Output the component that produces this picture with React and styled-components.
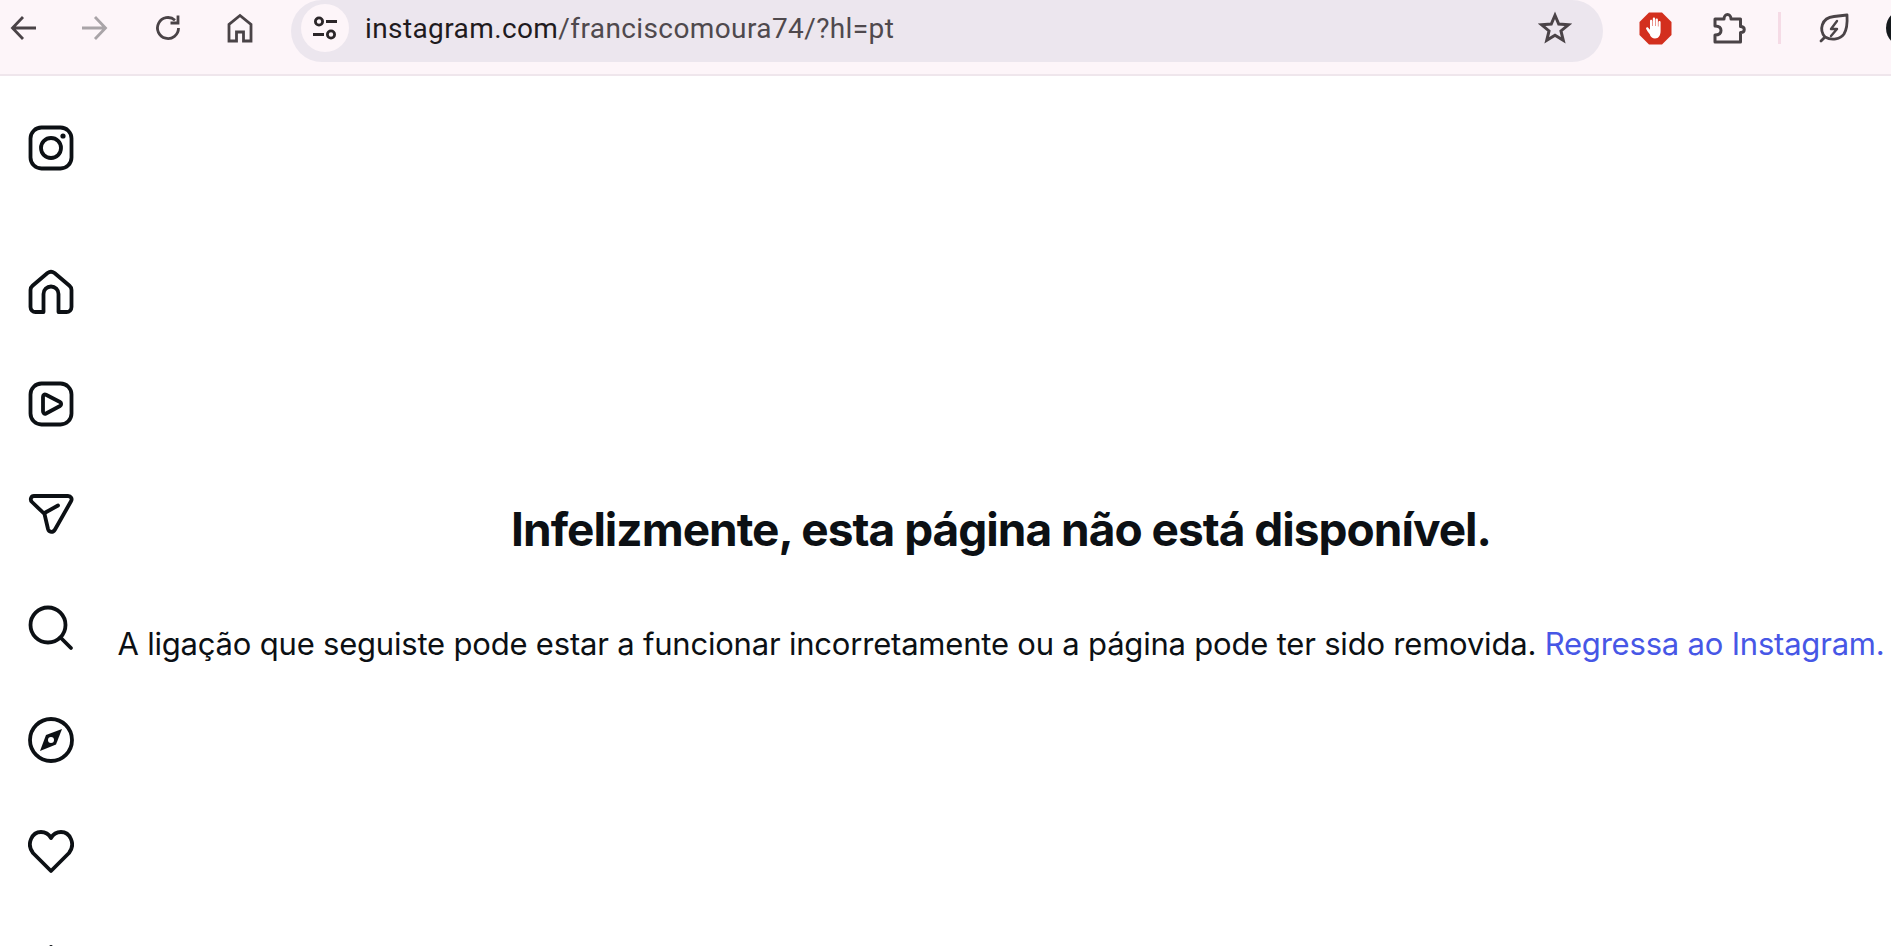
import React from 'react'
import styled, { createGlobalStyle } from 'styled-components'

const Global = createGlobalStyle`
  html, body {
    margin: 0;
    padding: 0;
    height: 100%;
    overflow: hidden;
    background: #fff;
  }
  #root {
    height: 100%;
  }
`

const Page = styled.div`
  height: 946px;
  display: flex;
  flex-direction: column;
  overflow: hidden;
  font-family: Inter, "Liberation Sans", sans-serif;
`

const Toolbar = styled.header`
  flex: 0 0 76px;
  box-sizing: border-box;
  display: flex;
  align-items: flex-start;
  background: #fdf5f9;
  border-bottom: 2px solid #efe6ec;
  overflow: hidden;
`

const NavGroup = styled.nav`
  display: flex;
  flex: 0 0 291px;
`

const NavButton = styled.div`
  width: 72px;
  height: 56px;
  display: flex;
  align-items: center;
  justify-content: center;
  color: ${p => (p.$off ? '#a9a4a8' : '#4a4347')};
  &:first-child {
    margin-left: -12px;
  }
  &:nth-child(2) {
    margin-right: 2px;
    margin-left: -2px;
  }
`

const Omnibox = styled.div`
  flex: 0 0 1312px;
  height: 62px;
  box-sizing: border-box;
  display: flex;
  align-items: center;
  padding: 0 31px 6px 10px;
  background: #ece6ee;
  border-radius: 31px;
  color: #4a4347;
`

const SiteChip = styled.div`
  width: 48px;
  height: 48px;
  border-radius: 50%;
  background: #fdf5f9;
  display: flex;
  align-items: center;
  justify-content: center;
  color: #2b2629;
`

const Url = styled.div`
  flex: 1;
  margin-left: 16px;
  font-family: Roboto, Inter, sans-serif;
  font-size: 28px;
  letter-spacing: 0.4px;
  color: #4f494d;
  span {
    color: #1f1b1e;
  }
`

const Extensions = styled.div`
  flex: none;
  display: flex;
  align-items: center;
  height: 56px;
  padding-left: 36px;
  color: #4a4347;
`

const ExtSlot = styled.div`
  width: ${p => p.$w}px;
  display: flex;
  align-items: center;
`

const Divider = styled.div`
  width: 3px;
  height: 32px;
  background: #f5dbe6;
  margin-right: 37px;
`

const Avatar = styled.div`
  width: 38px;
  height: 38px;
  border-radius: 50%;
  background: #14181c;
  margin-left: 36px;
  flex: none;
`

const Body = styled.div`
  flex: 1;
  display: flex;
  min-height: 0;
`

const Sidebar = styled.aside`
  flex: 0 0 111px;
  box-sizing: border-box;
  padding: 49px 0 0 28px;
  display: flex;
  flex-direction: column;
  color: #0c1014;
`

const Logo = styled.div`
  height: 50px;
  margin-bottom: 96px;
  display: flex;
  align-items: center;
`

const SideItem = styled.div`
  flex: none;
  height: 50px;
  margin-bottom: 62px;
  display: flex;
  align-items: center;
`

const Main = styled.main`
  flex: 1;
  min-width: 0;
  display: flex;
  flex-direction: column;
  align-items: center;
  padding-top: 427px;
  color: #0c1014;
`

const Title = styled.h1`
  margin: 0 0 70px;
  font-size: 46px;
  line-height: 52px;
  font-weight: 700;
  letter-spacing: -1px;
  white-space: nowrap;
`

const Message = styled.p`
  margin: 0;
  font-size: 31px;
  line-height: 38px;
  font-weight: 400;
  letter-spacing: -0.2px;
  white-space: nowrap;
`

const Back = styled.a`
  color: #4757e6;
  text-decoration: none;
`

const Icon = ({ size = 46, sw = 3.8, children }) => (
  <svg width={size} height={size} viewBox="0 0 46 46" fill="none" stroke="currentColor" strokeWidth={sw} strokeLinecap="round" strokeLinejoin="round">
    {children}
  </svg>
)

const Tool = ({ children, size = 32, sw = 2.8 }) => (
  <svg width={size} height={size} viewBox="0 0 32 32" fill="none" stroke="currentColor" strokeWidth={sw} strokeLinejoin="miter">
    {children}
  </svg>
)

export default function App() {
  return (
    <Page>
      <Global />
      <Toolbar>
        <NavGroup>
          <NavButton>
            <Tool><path d="M28 16H5M15 5 4.500 16 15 27" /></Tool>
          </NavButton>
          <NavButton $off>
            <Tool><path d="M4 16h23M17 5l10.500 11L17 27" /></Tool>
          </NavButton>
          <NavButton>
            <Tool><path d="M26.500 16A10.500 10.500 0 1 1 23 8.200" /><path d="M26 3.500V11h-7.500" /></Tool>
          </NavButton>
          <NavButton>
            <Tool><path d="M5 29V12.500L16 3.500l11 9V29h-7.500v-9h-7v9z" /></Tool>
          </NavButton>
        </NavGroup>
        <Omnibox>
          <SiteChip>
            <svg width="28" height="28" viewBox="0 0 28 28" fill="none" stroke="currentColor" strokeWidth="2.800">
              <circle cx="8" cy="7.500" r="3.600" />
              <path d="M15 7.500h11M2 20.500h11" />
              <circle cx="20" cy="20.500" r="3.600" />
            </svg>
          </SiteChip>
          <Url><span>instagram.com</span>/franciscomoura74/?hl=pt</Url>
          <Tool size={34} sw={2.8}>
            <path d="M16 4l3.500 8.300 9 .7-6.900 5.800 2.200 8.800L16 22.900l-7.800 4.700 2.200-8.800L3.500 13l9-.7z" />
          </Tool>
        </Omnibox>
        <Extensions>
          <ExtSlot $w={74}>
            <svg width="33" height="33" viewBox="0 0 33 33">
              <path d="M10 0.500h13L32.500 10v13L23 32.500H10L0.500 23V10z" fill="#d32f1e" />
              <path d="M11.200 23c-1.400-2-3.600-5-4-6-.6-1.400 1-2.300 2-1.200l1.800 2V9c0-1.600 2.200-1.600 2.300 0v5h.5V6.800c0-1.600 2.300-1.600 2.300 0V14h.5V7.800c0-1.600 2.300-1.600 2.300 0V14.500h.5V10c0-1.500 2.200-1.500 2.200 0v9c0 4-1.800 7.500-5.600 7.500-2.600 0-3.900-1.300-5.100-3.500z" fill="#fff" />
            </svg>
          </ExtSlot>
          <ExtSlot $w={65}>
            <svg width="34" height="36" viewBox="0 0 34 36" fill="none" stroke="currentColor" strokeWidth="3" strokeLinejoin="round">
              <path d="M2 9h9c0-6 7-6 7 0h9.500v7.500c5 0 5 6 0 6V32H2V25c4 0 6-2 6-4.500S6 16 2 16z" />
            </svg>
          </ExtSlot>
          <Divider />
          <svg width="32" height="32" viewBox="0 0 32 32" fill="none" stroke="currentColor" strokeWidth="2.800" strokeLinejoin="round" strokeLinecap="round">
            <path d="M3 29l4-4C1 18 3 6 16 4.500L29 3c.5 8 0 14-3 19-3.500 5-12 7-19 3" />
            <path d="M19 9l-6 8h6l-6 7" strokeWidth="2.400" />
          </svg>
          <Avatar />
        </Extensions>
      </Toolbar>
      <Body>
        <Sidebar>
          <Logo>
            <Icon>
              <rect x="2.500" y="2.500" width="41" height="41" rx="11" />
              <circle cx="23" cy="23" r="10" />
              <circle cx="35" cy="11" r="2.600" fill="currentColor" stroke="none" />
            </Icon>
          </Logo>
          <SideItem>
            <Icon>
              <path d="M2.500 21Q2.500 18.500 4.500 16.800L19.500 4Q23 1.500 26.500 4L41.500 16.800Q43.500 18.500 43.500 21V38a5 5 0 0 1-5 5H30.500V25a7.500 7.500 0 0 0-15 0V43H7.500a5 5 0 0 1-5-5z" />
            </Icon>
          </SideItem>
          <SideItem>
            <Icon>
              <rect x="2.500" y="2.500" width="41" height="41" rx="11" />
              <path d="M15 16c0-2 1.500-3 3-2.200L32 21a2.300 2.300 0 0 1 0 4l-14 7.500c-1.500.8-3-.2-3-2.200z" />
            </Icon>
          </SideItem>
          <SideItem>
            <Icon>
              <path d="M6 3h34c3 0 4.500 2.800 3 5.300L27 36.500c-2 3.500-6 3-7-.5l-3.500-15L4 9c-2.300-2.200-1-6 2-6z" />
              <path d="M16.500 20 30 12.500" />
            </Icon>
          </SideItem>
          <SideItem>
            <Icon>
              <circle cx="20" cy="20" r="17.500" />
              <path d="M32.500 32.500 43 43" />
            </Icon>
          </SideItem>
          <SideItem>
            <Icon>
              <circle cx="23" cy="23" r="21" />
              <path d="M34 12l-6 15.500L12 34l6-16z" fill="currentColor" stroke="none" />
              <circle cx="23" cy="23" r="3" fill="#fff" stroke="none" />
            </Icon>
          </SideItem>
          <SideItem>
            <Icon>
              <path d="M23 42 5 24C-2 15 4 3 13 3c5 0 8 2.500 10 6 2-3.500 5-6 10-6 9 0 15 12 8 21z" />
            </Icon>
          </SideItem>
          <SideItem>
            <Icon>
              <path d="M23 6v37M3 23h40" />
            </Icon>
          </SideItem>
        </Sidebar>
        <Main>
          <Title>Infelizmente, esta página não está disponível.</Title>
          <Message>
            A ligação que seguiste pode estar a funcionar incorretamente ou a página pode ter sido removida. <Back href="#">Regressa ao Instagram.</Back>
          </Message>
        </Main>
      </Body>
    </Page>
  )
}
